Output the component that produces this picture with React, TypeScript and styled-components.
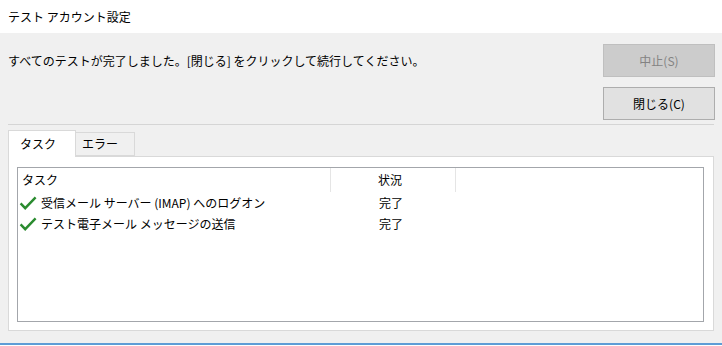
import styled, { createGlobalStyle } from 'styled-components';

const GlobalStyle = createGlobalStyle`
  html, body {
    margin: 0;
    padding: 0;
    background: #ffffff;
  }
  body {
    font-family: "Noto Sans CJK JP", "Noto Sans", sans-serif;
    font-size: 12px;
    color: #000;
  }
`;

const tasks = [
  { name: '受信メール サーバー (IMAP) へのログオン', status: '完了' },
  { name: 'テスト電子メール メッセージの送信', status: '完了' },
];

const CheckIcon = () => (
  <svg width="18" height="14" viewBox="0 0 18 14">
    <path
      d="M1.6 7.4 L6.2 12.2 L16.6 1.4"
      fill="none"
      stroke="#2a8b2f"
      strokeWidth="2.4"
      strokeLinejoin="miter"
    />
  </svg>
);

const App = () => {
  return (
    <>
      <GlobalStyle />
      <Window>
        <TitleBar>テスト アカウント設定</TitleBar>
        <Body>
          <TopRow>
            <Message>すべてのテストが完了しました。[閉じる] をクリックして続行してください。</Message>
            <ButtonCol>
              <Button disabled>中止(S)</Button>
              <Button>閉じる(C)</Button>
            </ButtonCol>
          </TopRow>
          <Separator />
          <TabStrip>
            <Tab $active $width={68} $pad={11}>タスク</Tab>
            <Tab $width={59} $pad={6}>エラー</Tab>
          </TabStrip>
          <Panel>
            <List>
              <HeaderRow>
                <HeaderCell>タスク</HeaderCell>
                <HeaderCell $status>状況</HeaderCell>
                <HeaderFill />
              </HeaderRow>
              {tasks.map((t) => (
                <Row key={t.name}>
                  <NameCell>
                    <CheckIcon />
                    <span>{t.name}</span>
                  </NameCell>
                  <StatusCell>{t.status}</StatusCell>
                </Row>
              ))}
            </List>
          </Panel>
        </Body>
        <BehindStrip />
      </Window>
    </>
  );
};

export default App;

const Window = styled.div`
  width: 722px;
  height: 346px;
  display: flex;
  flex-direction: column;
  overflow: hidden;
`;

const TitleBar = styled.div`
  height: 33px;
  display: flex;
  align-items: center;
  padding-left: 8px;
  background: #ffffff;
  font-size: 12px;
  line-height: 1;
`;

const Body = styled.div`
  flex: 1;
  display: flex;
  flex-direction: column;
  background: #f0f0f0;
  padding: 11px 8px 12px 8px;
`;

const TopRow = styled.div`
  display: flex;
  justify-content: space-between;
  padding-right: 0;
`;

const Message = styled.div`
  height: 33px;
  display: flex;
  align-items: center;
  line-height: 1;
`;

const ButtonCol = styled.div`
  display: flex;
  flex-direction: column;
  gap: 10px;
  margin-right: -1px;
`;

const Button = styled.button`
  width: 112px;
  height: 33px;
  font-family: inherit;
  font-size: 12px;
  line-height: 1;
  padding: 0;
  color: #000;
  background: #e1e1e1;
  border: 1px solid #adadad;
  border-radius: 0;
  &:disabled {
    color: #838383;
    background: #cccccc;
    border-color: #bfbfbf;
  }
`;

const Separator = styled.div`
  height: 1px;
  margin-top: 4px;
  background: #d5d5d5;
`;

const TabStrip = styled.div`
  display: flex;
  align-items: flex-end;
  height: 26px;
  margin-top: 5px;
  position: relative;
  z-index: 1;
`;

const Tab = styled.div<{ $active?: boolean; $width: number; $pad: number }>`
  width: ${(p) => p.$width}px;
  height: ${(p) => (p.$active ? 27 : 24)}px;
  box-sizing: border-box;
  padding-left: ${(p) => p.$pad}px;
  padding-bottom: ${(p) => (p.$active ? 1 : 0)}px;
  display: flex;
  align-items: center;
  background: ${(p) => (p.$active ? '#ffffff' : '#f0f0f0')};
  border: 1px solid #d9d9d9;
  border-bottom: ${(p) => (p.$active ? 'none' : '1px solid #d9d9d9')};
  border-left: ${(p) => (p.$active ? '1px solid #d9d9d9' : 'none')};
  margin-bottom: ${(p) => (p.$active ? -1 : 0)}px;
  line-height: 1;
`;

const Panel = styled.div`
  height: 175px;
  box-sizing: border-box;
  background: #ffffff;
  border: 1px solid #d9d9d9;
  padding: 10px 9px 8px 8px;
`;

const List = styled.div`
  height: 100%;
  box-sizing: border-box;
  border: 1px solid #a3a6ab;
  background: #ffffff;
`;

const HeaderRow = styled.div`
  display: grid;
  grid-template-columns: 313px 125px 1fr;
  height: 24px;
`;

const HeaderCell = styled.div<{ $status?: boolean }>`
  display: flex;
  align-items: center;
  padding-left: ${(p) => (p.$status ? 47 : 4)}px;
  border-right: 1px solid #e5e5e5;
  line-height: 1;
`;

const HeaderFill = styled.div``;

const Row = styled.div`
  display: grid;
  grid-template-columns: 313px 1fr;
  height: 21px;
  align-items: center;
  line-height: 1;
`;

const NameCell = styled.div`
  display: flex;
  align-items: center;
  gap: 4px;
  padding-left: 1px;
  white-space: nowrap;
`;

const StatusCell = styled.div`
  padding-left: 48px;
`;

const BehindStrip = styled.div`
  height: 3px;
  box-sizing: border-box;
  border-top: 2px solid #5e9dd6;
  background: #ffffff;
`;
